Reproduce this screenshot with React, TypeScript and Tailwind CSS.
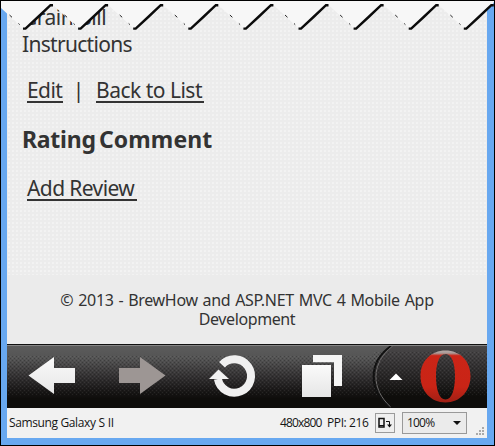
const PERIOD = 55.1;

function TornEdge() {
  const teeth = Array.from({ length: 9 }, (_, i) => i);
  const outline = teeth
    .map((i) => `L${24.5 + i * PERIOD} 29.5 L${52 + i * PERIOD} 4`)
    .join(" ");
  return (
    <svg className="absolute left-0 top-0" width="495" height="32" viewBox="0 0 495 32">
      <path d={`M0 0 V7 ${outline} L495 0 Z`} fill="#f7f7f7" />
      {teeth.map((i) => (
        <g key={i} stroke="#0b0b0b" fill="none">
          <path d={`M${23 + i * PERIOD} 28.6 h2.500 L${38 + i * PERIOD} 17 L${50.5 + i * PERIOD} 5.2 h2.500`} strokeWidth="2.4" />
          <path d={`M${9.5 + i * PERIOD} 15 l2.500 2.300 M${18.500 + i * PERIOD} 23.500 l1.200 1.100`} strokeWidth=".9" />
        </g>
      ))}
      <path d="M0 .5 H495 M494.5 0 V32 M.5 0 V32" stroke="#000" />
    </svg>
  );
}

function Toolbar() {
  return (
    <div className="h-16 border-t border-[#111] bg-[#0e0d0b]">
      <svg width="480" height="63" viewBox="7 345 480 63" className="block">
        <defs>
          <linearGradient id="bar" x1="0" y1="0" x2="0" y2="1">
            <stop offset="0" stopColor="#5c5c5c" />
            <stop offset=".2" stopColor="#555" />
            <stop offset=".48" stopColor="#353334" />
            <stop offset=".7" stopColor="#1c1a1a" />
            <stop offset=".85" stopColor="#0e0d0b" />
          </linearGradient>
          <linearGradient id="menu" x1="0" y1="0" x2="0" y2="1">
            <stop offset="0" stopColor="#4b494a" />
            <stop offset=".3" stopColor="#353334" />
            <stop offset=".55" stopColor="#242222" />
            <stop offset=".82" stopColor="#0e0d0b" />
          </linearGradient>
          <linearGradient id="light" x1="0" y1="0" x2="0" y2="1">
            <stop offset="0" stopColor="#fafafa" />
            <stop offset="1" stopColor="#e6e6e6" />
          </linearGradient>
          <linearGradient id="red" x1="0" y1="0" x2="0" y2="1">
            <stop offset="0" stopColor="#b9aaa8" />
            <stop offset=".05" stopColor="#a89b98" />
            <stop offset=".1" stopColor="#cb2517" />
            <stop offset=".7" stopColor="#c92416" />
            <stop offset="1" stopColor="#9f2015" />
          </linearGradient>
          <pattern id="dither" width="4" height="4" patternUnits="userSpaceOnUse">
            <path d="M0 0h1v1H0zM2 2h1v1H2z" fill="#000" opacity=".22" />
            <path d="M2 0h1v1H2zM0 2h1v1H0z" fill="#fff" opacity=".07" />
          </pattern>
        </defs>
        <rect x="7" y="345" width="480" height="63" fill="url(#bar)" />
        <rect x="7" y="356" width="480" height="40" fill="url(#dither)" />
        <path d="M391 345 C368 362 368 390 390 408 H487 V345Z" fill="url(#menu)" />
        <path d="M391 346 C368 362 368 390 390 407" stroke="#111" strokeWidth="2" fill="none" />
        <path d="M392.700 346 C370.700 363 370.700 389 390.700 407" stroke="#6b6969" fill="none" />
        <rect x="374" y="351" width="113" height="45" fill="url(#dither)" />
        <path d="M7 345.5H487" stroke="#858585" />
        <path d="M28.5 375.5 L54 357 V368 H75 V383 H54 V394 Z" fill="url(#light)" />
        <path d="M165.500 375.500 L140 357 V368 H119 V383 H140 V394 Z" fill="#9d9694" />
        <path d="M222 364.700 A16.700 16.700 0 1 1 217.900 379" fill="none" stroke="#f0f0f0" strokeWidth="8" />
        <path d="M209 379 L218.500 369.500 L229 379 Z" fill="#f2f2f2" />
        <path d="M313 355 H342 V386 H334 V362.300 H313 Z" fill="#f5f5f5" />
        <rect x="302" y="365" width="29" height="32" fill="url(#light)" />
        <path d="M389.500 380 L396 373.500 L402.500 380Z" fill="#fff" />
        <path fillRule="evenodd" d="M445.500 350.500 C460 350.500 470.500 361 470.500 376 C470.500 391 460 402.500 445.500 402.500 C431 402.500 420.500 391 420.500 376 C420.500 361 431 350.500 445.500 350.500Z M445.500 354 C439 354 436 364 436 376 C436 389 439 399.500 445.500 399.500 C452 399.500 455 389 455 376 C455 364 452 354 445.500 354Z" fill="url(#red)" />
      </svg>
    </div>
  );
}

function StatusBar() {
  return (
    <div className="flex h-[30px] items-center bg-[#f1f1f1] font-['Open_Sans','Noto_Sans',sans-serif] text-[12px] leading-4 text-[#151515]">
      <span className="ml-[2px] w-[271px] whitespace-nowrap tracking-[-0.4px] [word-spacing:0.3px]">Samsung Galaxy S II</span>
      <span className="w-[47px] whitespace-nowrap tracking-[-0.85px]">480x800</span>
      <span className="w-[48px] whitespace-nowrap tracking-[-0.4px]">PPI: 216</span>
      <span className="flex h-[20px] w-[20px] items-center justify-center border border-[#9b9b9b] bg-[#efefef]">
        <svg width="14" height="12" viewBox="0 0 14 12" fill="none" stroke="#111">
          <path d="M1 1.500H6V10H1Z" strokeWidth="1.500" />
          <path d="M1 8.500H6M8 4.500H11.500V9" />
          <path d="M9 7.500H14L11.500 10.500Z" fill="#111" stroke="none" />
        </svg>
      </span>
      <span className="ml-[7px] flex h-[22px] w-[65px] items-center justify-between border border-[#999] bg-[#ebebeb] pl-1 pr-[5px]">
        <span className="tracking-[-0.8px]">100%</span>
        <svg width="8" height="4"><path d="M0 0H8L4 4Z" fill="#111" /></svg>
      </span>
      <svg className="ml-[9px] mt-[17px]" width="9" height="9" fill="#aaa">
        <path d="M6 0h2v2H6zM3 3h2v2H3zM6 3h2v2H6zM0 6h2v2H0zM3 6h2v2H3zM6 6h2v2H6z" />
      </svg>
    </div>
  );
}

export default function App() {
  return (
    <div className="relative h-[446px] w-[495px] overflow-hidden border border-black bg-[#68a8f0] font-['Noto_Sans','Open_Sans',sans-serif]">
      <div className="mx-[6px] flex h-[437px] w-[480px] flex-col text-[#333]">
        <main className="h-[274px] bg-[#ececec] bg-[radial-gradient(#f2f2f2_0.7px,transparent_1px)] bg-[length:4px_4px] pl-[15px] pt-[3px] text-[21px] leading-[27px]">
          <div className="tracking-[-0.5px]">Grain Bill</div>
          <div className="tracking-[-0.7px]">Instructions</div>
          <div className="mt-[20px] flex whitespace-nowrap pl-[5px] leading-[25px]">
            <a className="h-[25px] w-9 border-b-2 border-[#333] tracking-[-0.6px]">Edit</a>
            <span className="w-[31px] text-center">|</span>
            <a className="ml-[2px] h-[25px] w-[108px] border-b-2 border-[#333] tracking-[-0.5px]">Back to List</a>
          </div>
          <div className="mt-[23px] flex text-[23px] font-bold">
            <span className="w-[77px] tracking-[-0.25px]">Rating</span>
            <span className="tracking-[0.1px]">Comment</span>
          </div>
          <div className="mt-[23px] pl-[5px] leading-[25px]">
            <a className="block h-[25px] w-[110px] whitespace-nowrap border-b-2 border-[#333] tracking-[-0.6px]">Add Review</a>
          </div>
        </main>
        <footer className="h-[69px] bg-[#ebebeb] pt-[16px] text-center text-[16px] leading-[19px]">
          <div className="tracking-[-0.32px] [word-spacing:1.05px]">© 2013 - BrewHow and ASP.NET MVC 4 Mobile App</div>
          <div className="tracking-[-0.4px]">Development</div>
        </footer>
        <Toolbar />
        <StatusBar />
      </div>
      <div className="absolute -left-px -top-px"><TornEdge /></div>
    </div>
  );
}
